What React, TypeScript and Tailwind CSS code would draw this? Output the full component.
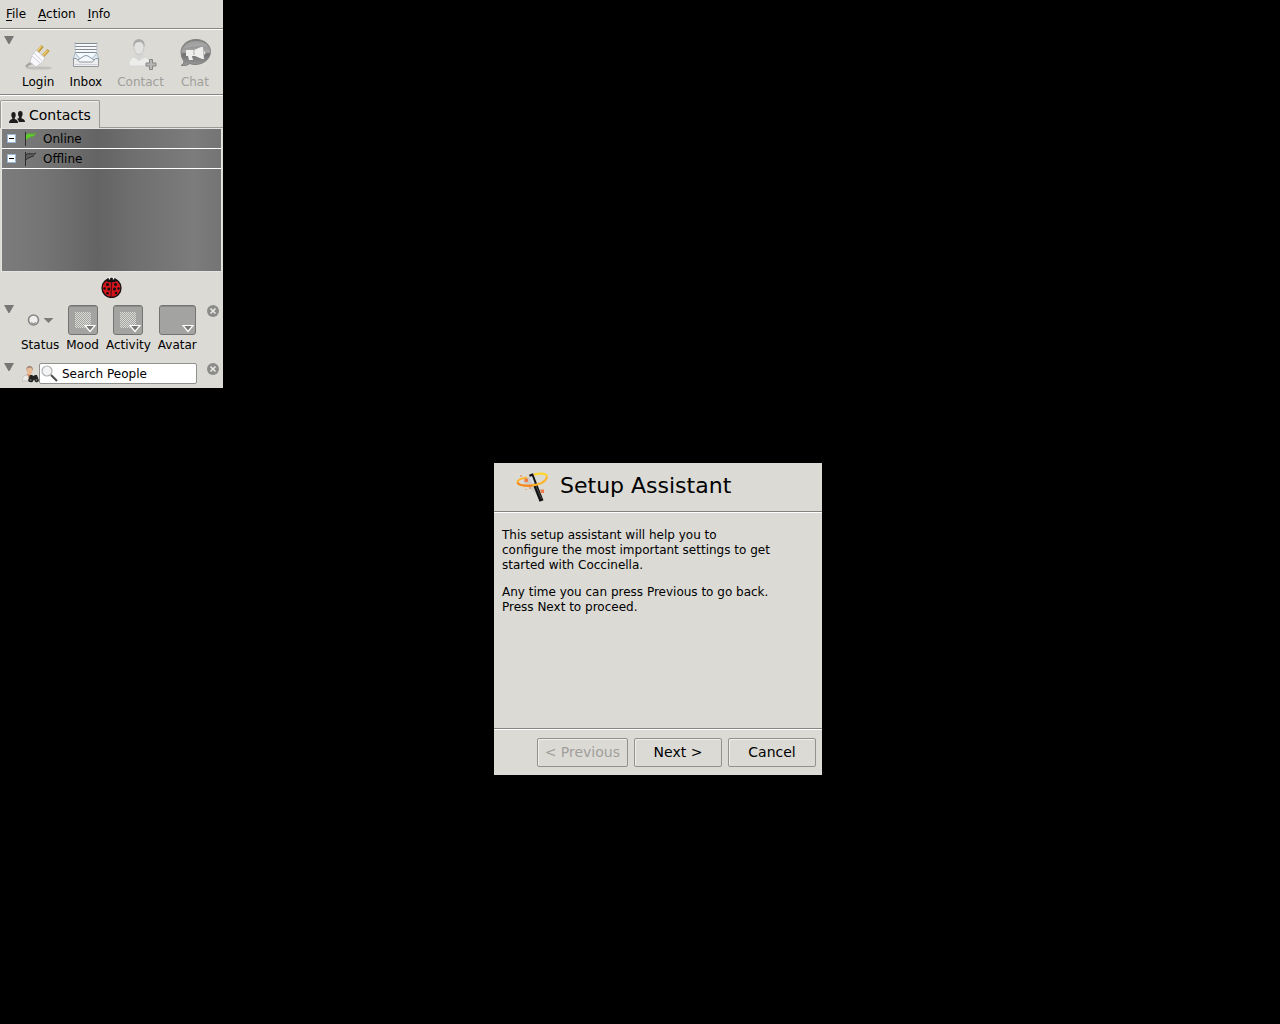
import React from "react";

function Disclosure({ label }: { label: string }) {
  return (
    <button aria-label={label} className="h-2 w-[10px] shrink-0">
      <svg width="10" height="8" viewBox="0 0 10 8" className="block">
        <path d="M0 0h10L5.500 8h-1z" fill="#777775" />
      </svg>
    </button>
  );
}

function Separator() {
  return <div className="h-[2px] border-t border-b border-t-[#858582] border-b-white" />;
}

function CloseButton({ label }: { label: string }) {
  return (
    <button aria-label={label} className="ml-auto h-3 w-3 shrink-0">
      <svg width="12" height="12" viewBox="0 0 12 12" className="block">
        <circle cx="6" cy="6" r="6" fill="#8b8b89" />
        <path d="M3.500 3.500l5 5M8.500 3.500l-5 5" stroke="#e8e8e5" strokeWidth="1.600" />
      </svg>
    </button>
  );
}

function LoginIcon() {
  return (
    <svg width="32" height="32" viewBox="0 0 32 32">
      <ellipse cx="17" cy="30" rx="13" ry="1.600" fill="#b5b5b1" opacity=".7" />
      <path d="M4 29q3-4 7-4" stroke="#a5a5a2" strokeWidth="2.400" fill="none" />
      <path d="M15.500 14l5-6M21 18l5.500-6" stroke="#c19a35" strokeWidth="3.200" />
      <path d="M15.500 13l4-5M21 17.500l4.500-5" stroke="#ecce78" strokeWidth="1.300" />
      <path d="M14 12l9 8-2 4-7 5-6-5 2-7z" fill="#f9f9fb" stroke="#c9c9ce" />
      <path d="M12 15l8 8M10 18l8 7" stroke="#cdced6" strokeWidth="1" />
    </svg>
  );
}

function InboxIcon() {
  return (
    <svg width="32" height="32" viewBox="0 0 32 32">
      <path d="M5 5h22l1 14H4z" fill="#f6f8fa" />
      <path d="M5 5.500h22M5 8.500h22M5 11.500h22M5 14.500h22" stroke="#818b94" strokeWidth="1" />
      <path d="M5 4v15M27 4v15" stroke="#b4bac0" />
      <path d="M5 15.500h22l2 6H3z" fill="#dce9f3" stroke="#aab6c0" />
      <path d="M5 15l8 9h6l8-9" fill="#f5faff" stroke="#a9b6c1" />
      <path d="M5 24l9-6q2-1 4 0l9 6" fill="#f5faff" stroke="#8b99a5" />
      <path d="M3.500 20.500h3l3 3.500h13l3-3.500h3v8h-25z" fill="#edeef0" stroke="#92979d" />
      <path d="M5 26.500h22" stroke="#ced1d5" />
    </svg>
  );
}

function ContactIcon() {
  return (
    <svg width="32" height="32" viewBox="0 0 32 32">
      <path d="M4 28q-1-9 7-9l3 1 4-1q8 0 7 9z" fill="#ececea" stroke="#d6d6d4" />
      <path d="M10 15h8l1 5-5 3-4-3z" fill="#d6d6d4" />
      <ellipse cx="14" cy="9.500" rx="5" ry="7" fill="#e2e2e1" stroke="#c6c6c4" />
      <path d="M8.500 9q-1-8 6-8 6 1 5 8-1-4-4-5-4 0-5 1z" fill="#a9a9a7" />
      <path d="M24.500 21.500h3v3.500h3.500v3h-3.500v3.500h-3v-3.500h-3.500v-3h3.500z" fill="#b6b6b4" stroke="#858583" />
    </svg>
  );
}

function ChatIcon() {
  return (
    <svg width="32" height="32" viewBox="0 0 32 32">
      <defs>
        <linearGradient id="bubble" x1="0" y1="0" x2="0" y2="1">
          <stop offset="0" stopColor="#7c7c7c" />
          <stop offset=".48" stopColor="#a8a8a8" />
          <stop offset=".55" stopColor="#707070" />
          <stop offset="1" stopColor="#9b9b9b" />
        </linearGradient>
      </defs>
      <path d="M17 1.500c8 0 14.500 5 14.500 12S25 26.500 16 26.500q-3 0-5-1-4 3-9 2 3-1 3-4-3-4-3-9C2 6.500 9 1.500 17 1.500z" fill="url(#bubble)" stroke="#808080" />
      <path d="M5 10q3-7 12-7 9 0 12 6-11-2-24 1z" fill="#b2b2b2" opacity=".6" />
      <path d="M7 12h8l7-3h2l1 12h-2l-7-3-3 0 1 4h-4l-1-4H7z" fill="#eeeeec" />
      <path d="M25 13q3 2 0 4" fill="#ddd" />
      <path d="M15 12v5" stroke="#aaa" />
    </svg>
  );
}

function ToolButton({ label, disabled, children }: { label: string; disabled?: boolean; children: React.ReactNode }) {
  return (
    <button disabled={disabled} className="flex flex-col items-center text-black disabled:text-[#a09f9b]">
      <span className="flex h-8 justify-center">{children}</span>
      <span className="mt-1 leading-[16px]">{label}</span>
    </button>
  );
}

function Flag({ color, edge }: { color: string; edge: string }) {
  return (
    <svg width="14" height="16" viewBox="0 0 14 16" className="ml-2">
      <path d="M1.500 1v14" stroke="#2c2c2c" />
      <path d="M2 4q3-2 5-1t5.500-1.500L10 5q-3 .5-4.500 1.500T2 9z" fill={color} />
      <path d="M2 3.500q3-1.500 5-.7T12 2M2 9q1.500-2 4-2.800T10 5" stroke={edge} strokeWidth="1" fill="none" />
    </svg>
  );
}

function GroupRow({ label, color, edge }: { label: string; color: string; edge: string }) {
  return (
    <li className="flex h-5 items-center border-b border-white pl-[5px]">
      <button aria-label={`Collapse ${label}`} className="h-[9px] w-[9px]">
        <svg width="9" height="9" viewBox="0 0 9 9" className="block">
          <rect x=".5" y=".5" width="8" height="8" fill="#f5faff" stroke="#9db7d2" />
          <path d="M2 4.500h5" stroke="#000" />
        </svg>
      </button>
      <Flag color={color} edge={edge} />
      <span className="ml-[5px]">{label}</span>
    </li>
  );
}

function PeopleIcon() {
  return (
    <svg width="16" height="12" viewBox="0 0 16 12" fill="#1c1c1c">
      <ellipse cx="4.500" cy="4" rx="2.200" ry="3" />
      <path d="M3.300 6h2.400v2q3.300 .8 3.300 4H0q0-3.200 3.300-4z" />
      <ellipse cx="11.300" cy="3" rx="2.300" ry="3" />
      <path d="M10 5h2.600v2.500Q16 8 16 11H9.800Q9.500 8.500 8 7.700L10 7z" />
    </svg>
  );
}

function Ladybird() {
  return (
    <svg width="22" height="22" viewBox="0 0 22 22">
      <circle cx="10.500" cy="12" r="9.500" fill="#d5151b" stroke="#111" strokeWidth="1.300" />
      <path d="M4.500 5Q6 2 10.500 2t6 3q-3 1.500-6 1-3 .5-6-1z" fill="#111" />
      <path d="M8.500 .5v3M12.500 .5v3" stroke="#eee" strokeWidth="1.400" />
      <path d="M10.500 5L10 21" stroke="#111" strokeWidth=".8" />
      <g fill="#111">
        <circle cx="6.500" cy="8.500" r="1.600" /><circle cx="14.500" cy="8.500" r="1.600" />
        <circle cx="3.500" cy="12.500" r="1.200" /><circle cx="17.500" cy="12.500" r="1.200" />
        <circle cx="7.800" cy="13" r="1.500" /><circle cx="13.500" cy="13" r="1.500" />
        <circle cx="6.500" cy="17.300" r="1.300" /><circle cx="15" cy="17" r="1.300" />
      </g>
    </svg>
  );
}

function PickerBox({ width, dotted }: { width: number; dotted?: boolean }) {
  const dots: React.ReactNode[] = [];
  if (dotted) {
    for (let y = 0; y < 16; y++) for (let x = y % 2; x < 16; x += 2) dots.push(<rect key={`${x}-${y}`} x={7 + x} y={7 + y} width="1" height="1" />);
  }
  return (
    <svg width={width} height="30" viewBox={`0 0 ${width} 30`}>
      <rect x=".5" y=".5" width={width - 1} height="29" rx="2.500" fill="#a3a3a1" stroke="#737371" />
      <path d={`M2 1.500h${width - 4}`} stroke="#8b8b89" />
      <g fill="#d9d9d6">{dots}</g>
      <path d={`M${width - 13} 20.500h10l-5 6z`} fill="#777775" stroke="#fff" strokeWidth="1.200" />
    </svg>
  );
}

function Picker({ label, children }: { label: string; children: React.ReactNode }) {
  return (
    <button className="flex flex-col items-center">
      <span className="flex h-[30px] items-center">{children}</span>
      <span className="mt-[2px] leading-[16px]">{label}</span>
    </button>
  );
}

function StatusIcon() {
  return (
    <svg width="28" height="14" viewBox="0 0 28 14">
      <circle cx="7.500" cy="7" r="5" fill="#eeeeec" stroke="#858583" strokeWidth="1.600" />
      <path d="M5 9.500q2.500 2 5 0" stroke="#8e8e8c" strokeWidth="1.200" fill="none" />
      <path d="M17.500 5h10l-5 5z" fill="#7b7b79" />
    </svg>
  );
}

function FinderIcon() {
  return (
    <svg width="17" height="18" viewBox="0 0 17 18">
      <path d="M0 16q0-6 5-6h4q4 1 4 6z" fill="#e9e9e7" stroke="#b7b5b1" strokeWidth=".7" />
      <path d="M5 9h4l-2 5z" fill="#cf8758" />
      <ellipse cx="7.500" cy="5.500" rx="2.800" ry="4.300" fill="#e8bb98" />
      <path d="M4.300 6Q4 1 7.500 .7q4 .3 3.300 5.300L9.500 3q-3-.5-4 0z" fill="#a48a78" />
      <path d="M8 10h2l1.500 1L13 10h2l2 5.500q-1 2.500-3.500 1.500L12 14.500 10.500 17Q7 18 6 15.500z" fill="#222" />
      <circle cx="8.500" cy="15" r="1" fill="#666" /><circle cx="14.500" cy="15" r="1" fill="#666" />
    </svg>
  );
}

function WandIcon() {
  return (
    <svg width="34" height="34" viewBox="0 0 34 34">
      <path d="M15 5L7 12l12 11 6 8z" fill="#999" opacity=".22" />
      <path d="M18 4.500Q30 2 31 6.500" stroke="#ffd52e" strokeWidth="2.400" fill="none" />
      <path d="M15 4L25.500 31" stroke="#111" strokeWidth="4.200" />
      <path d="M14.700 6.500L17.500 14" stroke="#d8d8e1" strokeWidth="2.800" />
      <path d="M20 16l5.500 13" stroke="#4c4c4c" strokeWidth="1" />
      <path d="M11 7.500Q1 9 1.500 12.500q1.500 4 12.500 3.200Q30 14 31 6.500" stroke="#fdb52a" strokeWidth="2" fill="none" />
      <path d="M1.500 12.500q2 4 15 3" stroke="#f6851f" strokeWidth="2" fill="none" />
      <g fill="#ef7a45">
        <path d="M8.500 8.500h3.500v3.500H8.500z" /><path d="M24.500 19.500H28V23h-3.500z" />
        <path d="M4 5h2v2H4zM13 17h2v2h-2zM9 19h2v1H9z" opacity=".55" />
      </g>
    </svg>
  );
}

function ContactsWindow() {
  return (
    <main className="absolute left-0 top-0 w-[223px] bg-[#dbdad5] pb-1 text-[12px]">
      <nav className="flex h-7 items-center gap-3 pl-[6px]">
        {["File", "Action", "Info"].map((m) => (
          <button key={m}><span className="underline underline-offset-2">{m[0]}</span>{m.slice(1)}</button>
        ))}
      </nav>
      <Separator />
      <section className="flex h-16 items-start pl-1 pt-[6px]">
        <Disclosure label="Toggle toolbar" />
        <div className="ml-2 mt-[2px] flex gap-[15px]">
          <ToolButton label="Login"><LoginIcon /></ToolButton>
          <ToolButton label="Inbox"><InboxIcon /></ToolButton>
          <ToolButton label="Contact" disabled><ContactIcon /></ToolButton>
          <ToolButton label="Chat" disabled><ChatIcon /></ToolButton>
        </div>
      </section>
      <Separator />
      <section className="pt-1">
        <div className="flex" role="tablist">
          <button role="tab" aria-selected="true" className="flex h-7 items-center gap-1 rounded-t-[2px] border border-b-0 border-[#9a9a96] px-2 pt-[2px] text-[14px] shadow-[inset_1px_1px_0_#f3f3f0]">
            <span className="mt-[2px]"><PeopleIcon /></span>Contacts
          </button>
          <div className="flex-1 border-b border-[#9a9a96]" />
        </div>
        <div className="mx-px border border-[#e4e4e0]">
          <ul className="h-[142px] bg-[linear-gradient(90deg,#7c7c7c_0%,#747474_20%,#646464_44%,#707070_62%,#7c7c7c_88%,#747474_100%)]">
            <GroupRow label="Online" color="#61cf2d" edge="#58a534" />
            <GroupRow label="Offline" color="#5c5c5c" edge="#2e2e2e" />
          </ul>
        </div>
      </section>
      <div className="flex justify-center pt-1"><Ladybird /></div>
      <section className="mt-[7px] flex items-start pl-1 pr-1">
        <Disclosure label="Toggle status panel" />
        <div className="ml-[7px] flex gap-[7px]">
          <Picker label="Status"><StatusIcon /></Picker>
          <Picker label="Mood"><PickerBox width={30} dotted /></Picker>
          <Picker label="Activity"><PickerBox width={30} dotted /></Picker>
          <Picker label="Avatar"><PickerBox width={37} /></Picker>
        </div>
        <CloseButton label="Close status panel" />
      </section>
      <section className="mt-[10px] flex items-start pl-1 pr-1">
        <Disclosure label="Toggle search panel" />
        <span className="ml-2 mt-[2px]"><FinderIcon /></span>
        <label className="flex h-[21px] w-[158px] items-center rounded-[2px] border border-[#91918e] bg-white pl-px">
          <svg width="18" height="18" viewBox="0 0 18 18" className="shrink-0">
            <path d="M10 10l6 6" stroke="#4a4a4a" strokeWidth="2" />
            <circle cx="6" cy="6" r="5" fill="#f1f3f5" stroke="#b2b2b2" strokeWidth="1.200" />
          </svg>
          <input aria-label="Search People" defaultValue="Search People" className="ml-[3px] w-full min-w-0 bg-transparent outline-none" />
        </label>
        <CloseButton label="Close search panel" />
      </section>
    </main>
  );
}

function DialogButton({ children, disabled }: { children: React.ReactNode; disabled?: boolean }) {
  return (
    <button disabled={disabled} className="h-[29px] min-w-[88px] rounded-[2px] border border-[#91918d] px-[7px] text-[14px] shadow-[inset_1px_1px_0_#efefec] disabled:text-[#a09f9b]">
      {children}
    </button>
  );
}

function SetupDialog() {
  return (
    <section role="dialog" aria-labelledby="setup-title" className="absolute left-[494px] top-[463px] w-[328px] bg-[#dbdad5] text-[12px] leading-[15px]">
      <header className="flex h-12 items-center gap-[10px] pl-[22px]">
        <WandIcon />
        <h1 id="setup-title" className="text-[22px] leading-[24px] pb-[2px]">Setup Assistant</h1>
      </header>
      <Separator />
      <div className="h-[215px] px-2 pt-[15px]">
        <p className="whitespace-nowrap">This setup assistant will help you to<br />configure the most important settings to get<br />started with Coccinella.</p>
        <p className="mt-3 whitespace-nowrap">Any time you can press Previous to go back.<br />Press Next to proceed.</p>
      </div>
      <Separator />
      <footer className="flex justify-end gap-[6px] px-[6px] py-2">
        <DialogButton disabled>&lt; Previous</DialogButton>
        <DialogButton>Next &gt;</DialogButton>
        <DialogButton>Cancel</DialogButton>
      </footer>
    </section>
  );
}

export default function App() {
  return (
    <div className="relative min-h-screen bg-black font-['DejaVu_Sans',sans-serif] text-black">
      <ContactsWindow />
      <SetupDialog />
    </div>
  );
}
